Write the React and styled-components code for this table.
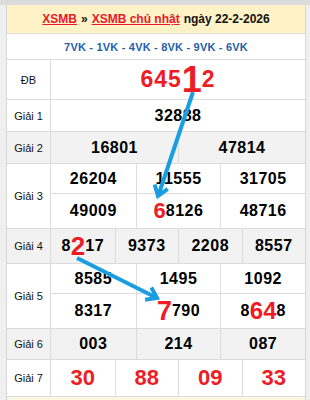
import React from 'react';
import styled, { createGlobalStyle } from 'styled-components';

const Global = createGlobalStyle`
  html, body { margin: 0; padding: 0; background: #efefef; }
  body { font-family: "Liberation Sans", Arial, sans-serif; }
`;

const Page = styled.div`
  position: relative;
  width: 310px;
  height: 400px;
  box-sizing: border-box;
  overflow: hidden;
  border-top: 5px solid #dcdcdc;
  padding: 0 4px 0 6px;
  background: #efefef;
`;

const Panel = styled.div`
  border-left: 1px solid #d6d6d6;
  border-right: 1px solid #d6d6d6;
  background: #fff;
`;

const Header = styled.div`
  height: 28px;
  background: #fff2c6;
  border-bottom: 1px solid #dcdcdc;
  display: flex;
  align-items: center;
  justify-content: center;
  font-size: 12px;
  font-weight: bold;
  color: #111;
  gap: 4px;
`;

const Link = styled.a`
  color: #e8192c;
  text-decoration: underline;
`;

const VkRow = styled.div`
  height: 25px;
  border-bottom: 1px solid #dcdcdc;
  display: flex;
  align-items: center;
  justify-content: center;
  color: #1f5fa9;
  font-size: 11px;
  font-weight: bold;
  letter-spacing: 0.2px;
`;

const Row = styled.div`
  display: grid;
  grid-template-columns: 44px 1fr;
  border-bottom: 1px solid #dcdcdc;
  background: ${p => (p.$alt ? '#f2f2f2' : '#fff')};
`;

const Label = styled.div`
  border-right: 1px solid #dcdcdc;
  display: flex;
  align-items: center;
  justify-content: center;
  font-size: 11px;
  color: #111;
`;

const Body = styled.div`
  display: flex;
  flex-direction: column;
`;

const SubRow = styled.div`
  display: grid;
  grid-template-columns: repeat(${p => p.$cols}, 1fr);
  height: ${p => p.$h}px;
  & + & { border-top: 1px solid #dcdcdc; }
`;

const Cell = styled.div`
  display: flex;
  align-items: center;
  justify-content: center;
  font-size: ${p => p.$size || 16}px;
  font-weight: bold;
  letter-spacing: ${p => (p.$ls != null ? p.$ls : 0.5)}px;
  color: ${p => (p.$red ? '#ee1c25' : '#000')};
  & + & { border-left: 1px solid #dcdcdc; }
`;

const Hl = styled.span`
  color: #ee1c25;
  font-size: ${p => p.$size}px;
  letter-spacing: 0;
  line-height: 1;
`;

const Footer = styled.div`
  height: 10px;
  background: #fdf6e3;
`;

const Arrows = styled.svg`
  position: absolute;
  left: 0;
  top: -5px;
  pointer-events: none;
`;

const num = (v, hl) => {
  if (!hl) return v;
  const [pre, mid, post, size] = hl;
  return (
    <>
      {pre}
      <Hl $size={size}>{mid}</Hl>
      {post}
    </>
  );
};

export default function App() {
  return (
    <>
      <Global />
      <Page>
        <Panel>
          <Header>
            <Link>XSMB</Link>
            <span>»</span>
            <Link>XSMB chủ nhật</Link>
            <span>ngày 22-2-2026</span>
          </Header>
          <VkRow>7VK - 1VK - 4VK - 8VK - 9VK - 6VK</VkRow>

          <Row>
            <Label>ĐB</Label>
            <Body>
              <SubRow $cols={1} $h={39}>
                <Cell $red $size={23} $ls={1}>
                  645<Hl $size={36}>1</Hl>2
                </Cell>
              </SubRow>
            </Body>
          </Row>

          <Row>
            <Label>Giải 1</Label>
            <Body>
              <SubRow $cols={1} $h={31}>
                <Cell>32888</Cell>
              </SubRow>
            </Body>
          </Row>

          <Row $alt>
            <Label>Giải 2</Label>
            <Body>
              <SubRow $cols={2} $h={31}>
                <Cell>16801</Cell>
                <Cell>47814</Cell>
              </SubRow>
            </Body>
          </Row>

          <Row>
            <Label>Giải 3</Label>
            <Body>
              <SubRow $cols={3} $h={29}>
                <Cell>26204</Cell>
                <Cell>11555</Cell>
                <Cell>31705</Cell>
              </SubRow>
              <SubRow $cols={3} $h={34}>
                <Cell>49009</Cell>
                <Cell>{num('', ['', '6', '8126', 22])}</Cell>
                <Cell>48716</Cell>
              </SubRow>
            </Body>
          </Row>

          <Row $alt>
            <Label>Giải 4</Label>
            <Body>
              <SubRow $cols={4} $h={34}>
                <Cell>{num('', ['8', '2', '17', 26])}</Cell>
                <Cell>9373</Cell>
                <Cell>2208</Cell>
                <Cell>8557</Cell>
              </SubRow>
            </Body>
          </Row>

          <Row>
            <Label>Giải 5</Label>
            <Body>
              <SubRow $cols={3} $h={29}>
                <Cell>8585</Cell>
                <Cell>1495</Cell>
                <Cell>1092</Cell>
              </SubRow>
              <SubRow $cols={3} $h={34}>
                <Cell>8317</Cell>
                <Cell>{num('', ['', '7', '790', 27])}</Cell>
                <Cell>{num('', ['8', '64', '8', 24])}</Cell>
              </SubRow>
            </Body>
          </Row>

          <Row $alt>
            <Label>Giải 6</Label>
            <Body>
              <SubRow $cols={3} $h={30}>
                <Cell>003</Cell>
                <Cell>214</Cell>
                <Cell>087</Cell>
              </SubRow>
            </Body>
          </Row>

          <Row>
            <Label>Giải 7</Label>
            <Body>
              <SubRow $cols={4} $h={36}>
                <Cell $red $size={22} $ls={0}>30</Cell>
                <Cell $red $size={22} $ls={0}>88</Cell>
                <Cell $red $size={22} $ls={0}>09</Cell>
                <Cell $red $size={22} $ls={0}>33</Cell>
              </SubRow>
            </Body>
          </Row>
          <Footer />
        </Panel>

        <Arrows width="310" height="400" viewBox="0 0 310 400">
          <g stroke="#1b9de2" strokeWidth="4" fill="none" strokeLinecap="butt" strokeLinejoin="miter">
            <line x1="193" y1="92" x2="158.5" y2="195" />
            <polyline points="167.7,188.9 158,196 154.6,184.5" />
            <line x1="77" y1="258" x2="156" y2="297.5" />
            <polyline points="151.3,287.5 157,298 145.1,299.8" />
          </g>
        </Arrows>
      </Page>
    </>
  );
}
